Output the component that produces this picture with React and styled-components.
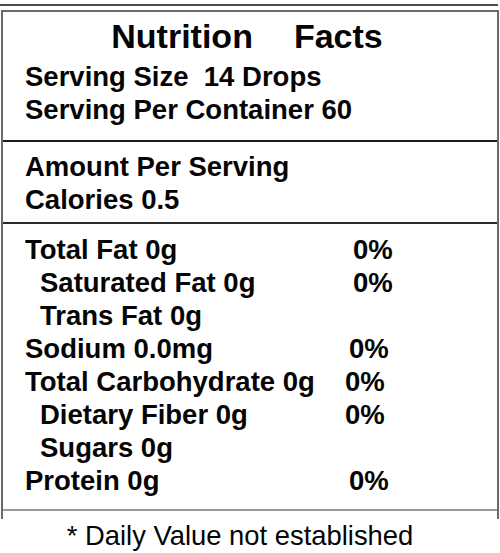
import styled, { createGlobalStyle } from "styled-components";

const GlobalStyle = createGlobalStyle`
  body {
    margin: 0;
    background: #fff;
  }
`;

const Page = styled.div`
  width: 500px;
  font-family: "Liberation Sans", Arial, sans-serif;
  color: #050505;
`;

const TopRule = styled.div`
  height: 2px;
  width: 498px;
  margin-top: 4px;
  background: #4a4a4a;
`;

const Label = styled.div`
  margin: 4px 0 0 1px;
  width: 494px;
  border: 2px solid #6a6a6a;
  border-bottom: none;
  padding-bottom: 8px;
`;

const Section = styled.section`
  padding: ${(p) => p.$pad};
  border-bottom: ${(p) => p.$rule};
`;

const Title = styled.h1`
  margin: 0 0 4px;
  display: flex;
  justify-content: center;
  gap: 41px;
  padding-right: 6px;
  font-size: 34px;
  line-height: 40px;
  font-weight: bold;
`;

const Line = styled.div`
  padding-left: 22px;
  font-size: 27.5px;
  line-height: 33px;
  font-weight: bold;
  white-space: pre;
`;

const Row = styled.div`
  display: grid;
  grid-template-columns: ${(p) => p.$at - 22}px auto;
  padding-left: 22px;
  font-size: 27.5px;
  line-height: 33px;
  font-weight: bold;
`;

const Name = styled.span`
  padding-left: ${(p) => (p.$sub ? 15 : 0)}px;
  white-space: nowrap;
`;

const Pct = styled.span`
  white-space: nowrap;
`;

const Footnote = styled.p`
  margin: 0;
  padding-right: 20px;
  text-align: center;
  font-size: 27.4px;
  line-height: 33px;
`;

const nutrients = [
  { name: "Total Fat 0g", pct: "0%", at: 350 },
  { name: "Saturated Fat 0g", pct: "0%", at: 350, sub: true },
  { name: "Trans Fat 0g", sub: true },
  { name: "Sodium 0.0mg", pct: "0%", at: 346 },
  { name: "Total Carbohydrate 0g", pct: "0%", at: 342 },
  { name: "Dietary Fiber 0g", pct: "0%", at: 342, sub: true },
  { name: "Sugars 0g", sub: true },
  { name: "Protein 0g", pct: "0%", at: 346 },
];

export default function App() {
  return (
    <Page>
      <GlobalStyle />
      <TopRule />
      <Label>
        <Section $pad="4px 0 14px" $rule="2px solid #1c1c1c">
          <Title>
            <span>Nutrition</span>
            <span>Facts</span>
          </Title>
          <Line>{"Serving Size  14 Drops"}</Line>
          <Line>Serving Per Container 60</Line>
        </Section>
        <Section $pad="8px 0 6px" $rule="2px solid #2a2a2a">
          <Line>Amount Per Serving</Line>
          <Line>Calories 0.5</Line>
        </Section>
        <Section $pad="9px 0 12px" $rule="2px solid #9a9a9a">
          {nutrients.map((n) => (
            <Row key={n.name} $at={n.at || 350}>
              <Name $sub={n.sub}>{n.name}</Name>
              {n.pct && <Pct>{n.pct}</Pct>}
            </Row>
          ))}
        </Section>
      </Label>
      <Footnote>* Daily Value not established</Footnote>
    </Page>
  );
}
